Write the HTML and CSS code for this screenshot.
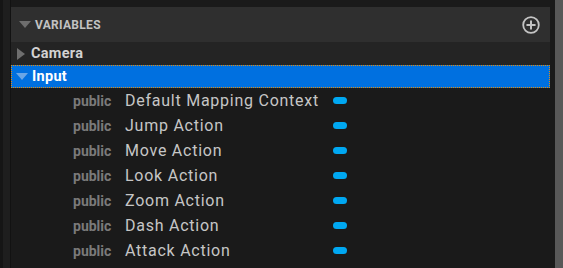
FILE: index.html
```html
<!DOCTYPE html>
<html lang="en">
<head>
  <meta charset="UTF-8" />
  <title>Variables</title>
  <link rel="stylesheet" href="styles.css">
</head>
<body>
  <div class="side"></div>
  <div class="panel">
    <div class="panel-header">
      <span class="arrow-down grey"></span>
      <span class="panel-title">VARIABLES</span>
      <svg class="add-btn" width="18" height="18" viewBox="0 0 18 18" aria-label="Add variable">
        <circle cx="9" cy="9" r="7.8" fill="none" stroke="#c4c4c4" stroke-width="1.8"/>
        <path d="M9 5.2v7.6M5.2 9h7.6" stroke="#c4c4c4" stroke-width="2" stroke-linecap="round"/>
      </svg>
    </div>
    <div class="category">
      <span class="arrow-right"></span>
      <span class="cat-name">Camera</span>
    </div>
    <div class="category selected">
      <span class="arrow-down blue"></span>
      <span class="cat-name">Input</span>
    </div>
    <ul class="var-list">
      <li class="var-row"><span class="access">public</span><span class="var-name">Default Mapping Context</span><span class="pin"></span></li>
      <li class="var-row"><span class="access">public</span><span class="var-name">Jump Action</span><span class="pin"></span></li>
      <li class="var-row"><span class="access">public</span><span class="var-name">Move Action</span><span class="pin"></span></li>
      <li class="var-row"><span class="access">public</span><span class="var-name">Look Action</span><span class="pin"></span></li>
      <li class="var-row"><span class="access">public</span><span class="var-name">Zoom Action</span><span class="pin"></span></li>
      <li class="var-row"><span class="access">public</span><span class="var-name">Dash Action</span><span class="pin"></span></li>
      <li class="var-row"><span class="access">public</span><span class="var-name">Attack Action</span><span class="pin"></span></li>
    </ul>
  </div>
  <div class="gutter"></div>
  <div class="scrollbar"></div>
</body>
</html>
```

FILE: styles.css
```css
*, *::before, *::after {
  box-sizing: border-box;
}
html, body {
  margin: 0;
  height: 100%;
}
body {
  display: flex;
  background: #1a1a1a;
  font-family: Roboto, "Noto Sans", sans-serif;
  overflow: hidden;
}

.side {
  width: 11px;
  background: #1e1e1e;
  border-left: 3px solid #151515;
  border-right: 1px solid #121212;
}

.panel {
  flex: 1;
  padding-top: 7px;
  background: #1a1a1a;
}

.panel-header {
  height: 35px;
  background: #2f2f2f;
  display: flex;
  align-items: center;
  padding-left: 8px;
  padding-right: 10px;
}
.panel-title {
  font-size: 12px;
  font-weight: 700;
  color: #c2c2c2;
  margin-left: 4px;
  letter-spacing: 0.3px;
}
.add-btn {
  margin-left: auto;
}

.arrow-down {
  width: 0;
  height: 0;
  border-left: 6px solid transparent;
  border-right: 6px solid transparent;
  border-top: 7px solid #6e6e6e;
}
.arrow-down.blue {
  border-top-color: #6aa6e6;
}
.arrow-right {
  width: 0;
  height: 0;
  border-top: 6.5px solid transparent;
  border-bottom: 6.5px solid transparent;
  border-left: 8px solid #6e6e6e;
  margin-left: 1px;
}

.category {
  height: 23px;
  display: flex;
  align-items: center;
  padding-left: 5px;
  background: #242424;
}
.cat-name {
  font-size: 14.5px;
  font-weight: 700;
  color: #d2d2d2;
  margin-left: 6px;
  letter-spacing: 0.3px;
}
.category.selected {
  background: #0070e0;
  border: 1px dotted #e08c10;
  padding-left: 4px;
}
.category.selected .cat-name {
  color: #ffffff;
  margin-left: 4px;
}

.var-list {
  list-style: none;
  margin: 0;
  padding: 0;
}
.var-row {
  height: 25px;
  display: flex;
  align-items: center;
  padding-left: 62px;
}
.access {
  width: 52px;
  font-size: 14px;
  font-weight: 700;
  color: #7a7a7a;
}
.var-name {
  width: 208px;
  font-size: 16px;
  color: #c6c6c6;
  letter-spacing: 0.75px;
  white-space: nowrap;
}
.pin {
  width: 14px;
  height: 7px;
  border-radius: 4px;
  background: #00a8f2;
}

.gutter {
  width: 5px;
  background: #1a1a1a;
}
.scrollbar {
  width: 8px;
  background: #585858;
}
```
